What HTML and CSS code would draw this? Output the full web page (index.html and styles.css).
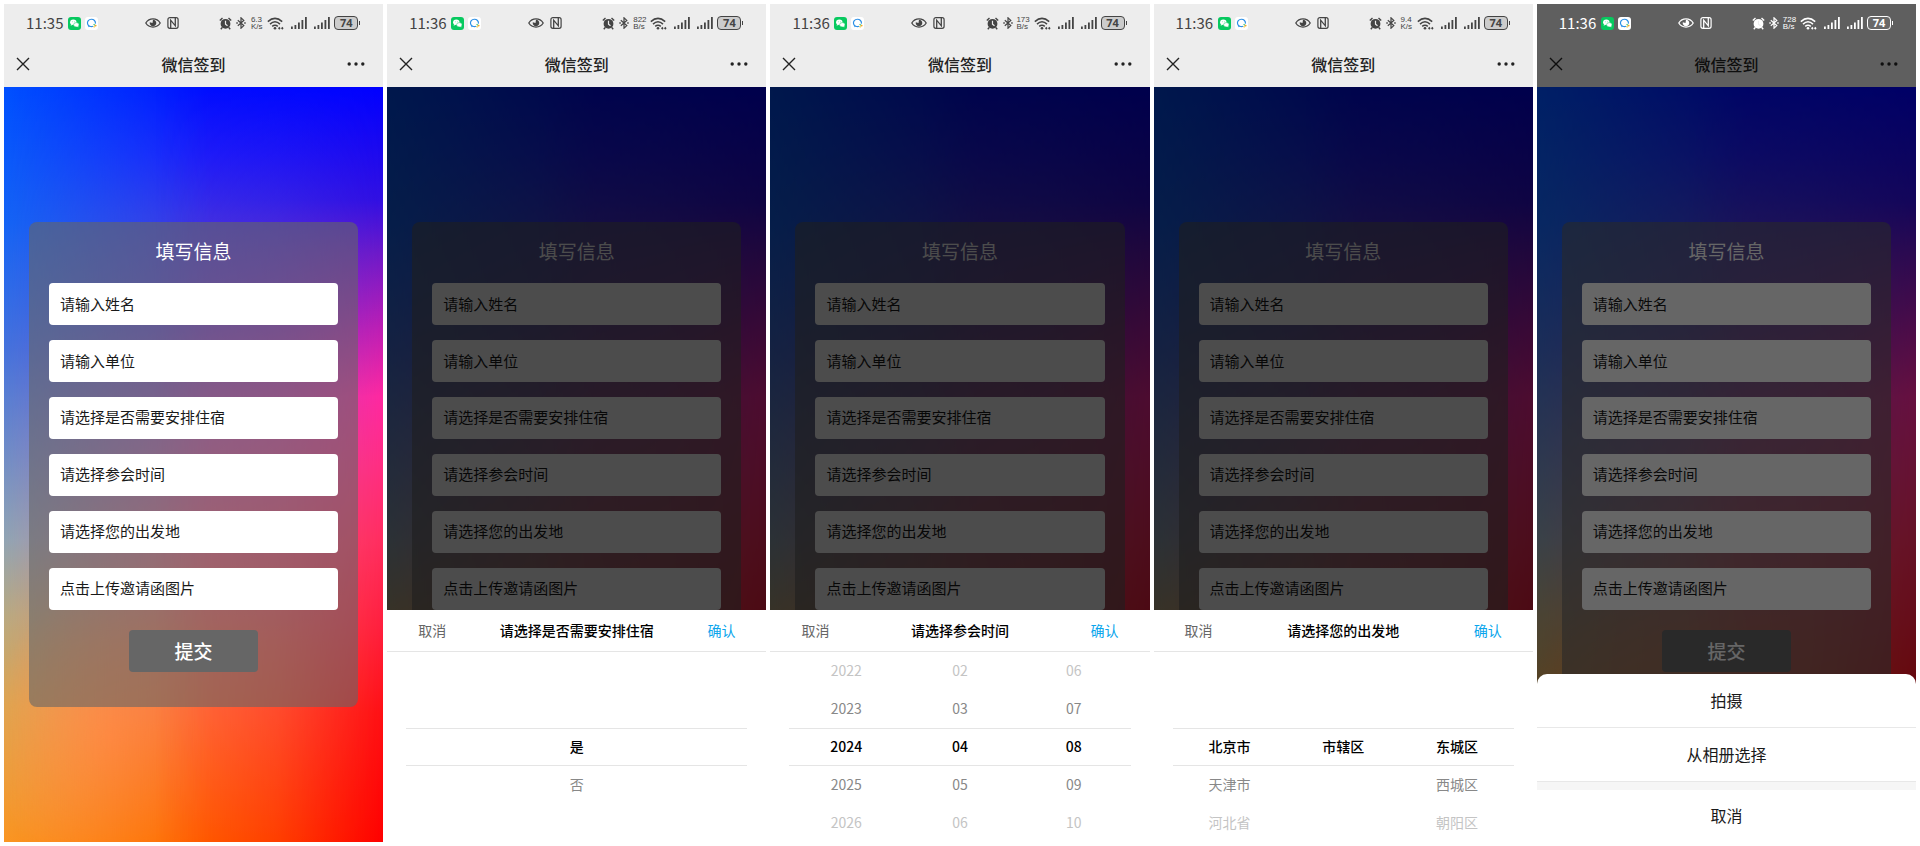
FILE: index.html
```html
<!DOCTYPE html>
<html lang="zh-CN">
<head>
<meta charset="utf-8">
<meta name="viewport" content="width=device-width, initial-scale=1">
<title>微信签到</title>
<link rel="stylesheet" href="styles.css">
</head>
<body>
<svg class="sprite" aria-hidden="true">
  <symbol id="wechat" viewBox="0 0 13 13">
    <rect width="13" height="13" rx="3" fill="#07c95f"/>
    <ellipse cx="5.3" cy="5.3" rx="3.2" ry="2.7" fill="#fff"/>
    <path d="M3 7l-.3 1.7L4.6 7.8z" fill="#fff"/>
    <ellipse cx="8.3" cy="7.8" rx="2.7" ry="2.2" fill="#fff" stroke="#07c95f" stroke-width=".5"/>
    <path d="M9 9.6l1.2.9-.1-1.4z" fill="#fff"/>
    <g fill="#07c95f"><circle cx="4.3" cy="4.8" r=".4"/><circle cx="6.3" cy="4.8" r=".4"/></g>
  </symbol>
  <symbol id="bubble" viewBox="0 0 13 13">
    <rect width="13" height="13" rx="3" fill="#fff"/>
    <path d="M8.2 9.3A4 3.7 0 1 1 10.4 6.6" fill="none" stroke="#2b8fe6" stroke-width="1.2"/>
    <path d="M3.6 8.6l-.4 1.6 1.8-.7z" fill="#2b8fe6"/>
    <path d="M8.6 7.2l1.3 1.2" stroke="#35c46a" stroke-width="1.1"/>
    <path d="M10.2 8l1 1.3" stroke="#f5a623" stroke-width="1.4"/>
    <path d="M8.6 9.3l1 1.1" stroke="#f7c948" stroke-width="1.4"/>
  </symbol>
  <symbol id="eye" viewBox="0 0 16 12">
    <path d="M.8 6C4.200 .6 11.800 .6 15.200 6 11.800 11.400 4.200 11.400 .8 6z" fill="none" stroke="currentColor" stroke-width="1.300"/>
    <path d="M8 2.700a3.300 3.300 0 1 1-3.200 2.500l2.700.7z" fill="currentColor"/>
  </symbol>
  <symbol id="nfc" viewBox="0 0 12 12">
    <rect x=".9" y=".7" width="10.200" height="10.600" rx="2" fill="none" stroke="currentColor" stroke-width="1.200"/>
    <path d="M3.700 11V3.200L8.300 8.800V1" fill="none" stroke="currentColor" stroke-width="1.300"/>
  </symbol>
  <symbol id="alarm" viewBox="0 0 13 13">
    <circle cx="6.500" cy="6.800" r="4.900" fill="currentColor"/>
    <path d="M.8 3.500L3.500 1M12.200 3.500L9.500 1M3.200 10.500L1.800 12.200M9.800 10.500l1.400 1.700" stroke="currentColor" stroke-width="1.400" fill="none"/>
    <path class="alarm-hand" d="M6.500 3.800v3.300l2 1.700" fill="none" stroke-width="1.200"/>
  </symbol>
  <symbol id="bluetooth" viewBox="0 0 10 12">
    <path d="M1.800 3.300l6 5.300L5 11.200V.8l2.800 2.600-6 5.300" fill="none" stroke="currentColor" stroke-width="1.200"/>
    <path d="M.3 5.300h1.500v1.400H.3zM8.200 5.300h1.500v1.400H8.200z" fill="currentColor"/>
  </symbol>
  <symbol id="wifi" viewBox="0 0 17 13">
    <g fill="none" stroke="currentColor" stroke-width="1.500">
      <path d="M.8 4.600Q8 -1.800 15.200 4.600"/><path d="M3 7.100Q8 2.500 13 7.100"/><path d="M5.200 9.400Q8 7 10.800 9.400"/>
    </g>
    <circle cx="8" cy="11.200" r="1.300" fill="currentColor"/>
    <path d="M11 11.300l1.300-1.500 1.300 1.500-1.300 1.500zM14 11.300l1.300-1.500 1.300 1.500-1.300 1.500z" fill="currentColor"/>
  </symbol>
  <symbol id="signal" viewBox="0 0 16 12">
    <path d="M0 9.500h1.800V12H0zM3.500 8h1.800v4H3.500zM7 5.500h1.800V12H7zM10.500 3h1.800v9h-1.800zM14 0h1.800v12H14z" fill="currentColor"/>
  </symbol>
  <symbol id="cross" viewBox="0 0 14 14">
    <path d="M1 1l12 12M13 1L1 13" fill="none" stroke="currentColor" stroke-width="1.400"/>
  </symbol>
  <symbol id="dots" viewBox="0 0 18 4">
    <g fill="currentColor"><circle cx="2.200" cy="2" r="1.700"/><circle cx="9" cy="2" r="1.700"/><circle cx="15.800" cy="2" r="1.700"/></g>
  </symbol>
</svg>

<main class="gallery">

  <section class="phone">
    <header class="top">
      <div class="status">
        <div class="status-group"><span class="clock">11:35</span><svg class="i13"><use href="#wechat"/></svg><svg class="i13"><use href="#bubble"/></svg></div>
        <div class="status-group wide"><svg class="eye"><use href="#eye"/></svg><svg class="i12"><use href="#nfc"/></svg></div>
        <div class="status-group end"><svg class="i13"><use href="#alarm"/></svg><svg class="bt"><use href="#bluetooth"/></svg><span class="speed"><span>6.3</span><span>K/s</span></span><svg class="wifi"><use href="#wifi"/></svg><svg class="signal"><use href="#signal"/></svg><svg class="signal"><use href="#signal"/></svg><span class="battery">74</span></div>
      </div>
      <nav class="navbar">
        <button class="icon-button" type="button" aria-label="关闭"><svg class="cross"><use href="#cross"/></svg></button>
        <h1 class="nav-title">微信签到</h1>
        <button class="icon-button" type="button" aria-label="更多"><svg class="dots"><use href="#dots"/></svg></button>
      </nav>
    </header>
    <div class="page">
      <form class="card">
        <h2 class="card-title">填写信息</h2>
        <input class="field" type="text" placeholder="请输入姓名" aria-label="姓名">
        <input class="field" type="text" placeholder="请输入单位" aria-label="单位">
        <select class="field" aria-label="住宿"><option>请选择是否需要安排住宿</option></select>
        <select class="field" aria-label="参会时间"><option>请选择参会时间</option></select>
        <select class="field" aria-label="出发地"><option>请选择您的出发地</option></select>
        <button class="field" type="button">点击上传邀请函图片</button>
        <button class="submit" type="submit">提交</button>
      </form>
    </div>
  </section>

  <section class="phone">
    <header class="top">
      <div class="status">
        <div class="status-group"><span class="clock">11:36</span><svg class="i13"><use href="#wechat"/></svg><svg class="i13"><use href="#bubble"/></svg></div>
        <div class="status-group wide"><svg class="eye"><use href="#eye"/></svg><svg class="i12"><use href="#nfc"/></svg></div>
        <div class="status-group end"><svg class="i13"><use href="#alarm"/></svg><svg class="bt"><use href="#bluetooth"/></svg><span class="speed"><span>822</span><span>B/s</span></span><svg class="wifi"><use href="#wifi"/></svg><svg class="signal"><use href="#signal"/></svg><svg class="signal"><use href="#signal"/></svg><span class="battery">74</span></div>
      </div>
      <nav class="navbar">
        <button class="icon-button" type="button" aria-label="关闭"><svg class="cross"><use href="#cross"/></svg></button>
        <h1 class="nav-title">微信签到</h1>
        <button class="icon-button" type="button" aria-label="更多"><svg class="dots"><use href="#dots"/></svg></button>
      </nav>
    </header>
    <div class="page">
      <form class="card">
        <h2 class="card-title">填写信息</h2>
        <input class="field" type="text" placeholder="请输入姓名" aria-label="姓名">
        <input class="field" type="text" placeholder="请输入单位" aria-label="单位">
        <select class="field" aria-label="住宿"><option>请选择是否需要安排住宿</option></select>
        <select class="field" aria-label="参会时间"><option>请选择参会时间</option></select>
        <select class="field" aria-label="出发地"><option>请选择您的出发地</option></select>
        <button class="field" type="button">点击上传邀请函图片</button>
        <button class="submit" type="submit">提交</button>
      </form>
      <div class="mask"></div>
      <div class="picker">
        <div class="picker-bar">
          <button class="picker-cancel" type="button">取消</button>
          <h3 class="picker-title">请选择是否需要安排住宿</h3>
          <button class="picker-confirm" type="button">确认</button>
        </div>
        <div class="wheels">
          <ul class="wheel"><li></li><li></li><li>是</li><li>否</li><li></li></ul>
        </div>
      </div>
    </div>
  </section>

  <section class="phone">
    <header class="top">
      <div class="status">
        <div class="status-group"><span class="clock">11:36</span><svg class="i13"><use href="#wechat"/></svg><svg class="i13"><use href="#bubble"/></svg></div>
        <div class="status-group wide"><svg class="eye"><use href="#eye"/></svg><svg class="i12"><use href="#nfc"/></svg></div>
        <div class="status-group end"><svg class="i13"><use href="#alarm"/></svg><svg class="bt"><use href="#bluetooth"/></svg><span class="speed"><span>173</span><span>B/s</span></span><svg class="wifi"><use href="#wifi"/></svg><svg class="signal"><use href="#signal"/></svg><svg class="signal"><use href="#signal"/></svg><span class="battery">74</span></div>
      </div>
      <nav class="navbar">
        <button class="icon-button" type="button" aria-label="关闭"><svg class="cross"><use href="#cross"/></svg></button>
        <h1 class="nav-title">微信签到</h1>
        <button class="icon-button" type="button" aria-label="更多"><svg class="dots"><use href="#dots"/></svg></button>
      </nav>
    </header>
    <div class="page">
      <form class="card">
        <h2 class="card-title">填写信息</h2>
        <input class="field" type="text" placeholder="请输入姓名" aria-label="姓名">
        <input class="field" type="text" placeholder="请输入单位" aria-label="单位">
        <select class="field" aria-label="住宿"><option>请选择是否需要安排住宿</option></select>
        <select class="field" aria-label="参会时间"><option>请选择参会时间</option></select>
        <select class="field" aria-label="出发地"><option>请选择您的出发地</option></select>
        <button class="field" type="button">点击上传邀请函图片</button>
        <button class="submit" type="submit">提交</button>
      </form>
      <div class="mask"></div>
      <div class="picker">
        <div class="picker-bar">
          <button class="picker-cancel" type="button">取消</button>
          <h3 class="picker-title">请选择参会时间</h3>
          <button class="picker-confirm" type="button">确认</button>
        </div>
        <div class="wheels">
          <ul class="wheel"><li>2022</li><li>2023</li><li>2024</li><li>2025</li><li>2026</li></ul>
          <ul class="wheel"><li>02</li><li>03</li><li>04</li><li>05</li><li>06</li></ul>
          <ul class="wheel"><li>06</li><li>07</li><li>08</li><li>09</li><li>10</li></ul>
        </div>
      </div>
    </div>
  </section>

  <section class="phone">
    <header class="top">
      <div class="status">
        <div class="status-group"><span class="clock">11:36</span><svg class="i13"><use href="#wechat"/></svg><svg class="i13"><use href="#bubble"/></svg></div>
        <div class="status-group wide"><svg class="eye"><use href="#eye"/></svg><svg class="i12"><use href="#nfc"/></svg></div>
        <div class="status-group end"><svg class="i13"><use href="#alarm"/></svg><svg class="bt"><use href="#bluetooth"/></svg><span class="speed"><span>9.4</span><span>K/s</span></span><svg class="wifi"><use href="#wifi"/></svg><svg class="signal"><use href="#signal"/></svg><svg class="signal"><use href="#signal"/></svg><span class="battery">74</span></div>
      </div>
      <nav class="navbar">
        <button class="icon-button" type="button" aria-label="关闭"><svg class="cross"><use href="#cross"/></svg></button>
        <h1 class="nav-title">微信签到</h1>
        <button class="icon-button" type="button" aria-label="更多"><svg class="dots"><use href="#dots"/></svg></button>
      </nav>
    </header>
    <div class="page">
      <form class="card">
        <h2 class="card-title">填写信息</h2>
        <input class="field" type="text" placeholder="请输入姓名" aria-label="姓名">
        <input class="field" type="text" placeholder="请输入单位" aria-label="单位">
        <select class="field" aria-label="住宿"><option>请选择是否需要安排住宿</option></select>
        <select class="field" aria-label="参会时间"><option>请选择参会时间</option></select>
        <select class="field" aria-label="出发地"><option>请选择您的出发地</option></select>
        <button class="field" type="button">点击上传邀请函图片</button>
        <button class="submit" type="submit">提交</button>
      </form>
      <div class="mask"></div>
      <div class="picker">
        <div class="picker-bar">
          <button class="picker-cancel" type="button">取消</button>
          <h3 class="picker-title">请选择您的出发地</h3>
          <button class="picker-confirm" type="button">确认</button>
        </div>
        <div class="wheels">
          <ul class="wheel"><li></li><li></li><li>北京市</li><li>天津市</li><li>河北省</li></ul>
          <ul class="wheel"><li></li><li></li><li>市辖区</li><li></li><li></li></ul>
          <ul class="wheel"><li></li><li></li><li>东城区</li><li>西城区</li><li>朝阳区</li></ul>
        </div>
      </div>
    </div>
  </section>

  <section class="phone">
    <header class="top top-dimmed">
      <div class="status">
        <div class="status-group"><span class="clock">11:36</span><svg class="i13"><use href="#wechat"/></svg><svg class="i13"><use href="#bubble"/></svg></div>
        <div class="status-group wide"><svg class="eye"><use href="#eye"/></svg><svg class="i12"><use href="#nfc"/></svg></div>
        <div class="status-group end"><svg class="i13"><use href="#alarm"/></svg><svg class="bt"><use href="#bluetooth"/></svg><span class="speed"><span>728</span><span>B/s</span></span><svg class="wifi"><use href="#wifi"/></svg><svg class="signal"><use href="#signal"/></svg><svg class="signal"><use href="#signal"/></svg><span class="battery">74</span></div>
      </div>
      <nav class="navbar">
        <button class="icon-button" type="button" aria-label="关闭"><svg class="cross"><use href="#cross"/></svg></button>
        <h1 class="nav-title">微信签到</h1>
        <button class="icon-button" type="button" aria-label="更多"><svg class="dots"><use href="#dots"/></svg></button>
      </nav>
    </header>
    <div class="page">
      <form class="card">
        <h2 class="card-title">填写信息</h2>
        <input class="field" type="text" placeholder="请输入姓名" aria-label="姓名">
        <input class="field" type="text" placeholder="请输入单位" aria-label="单位">
        <select class="field" aria-label="住宿"><option>请选择是否需要安排住宿</option></select>
        <select class="field" aria-label="参会时间"><option>请选择参会时间</option></select>
        <select class="field" aria-label="出发地"><option>请选择您的出发地</option></select>
        <button class="field" type="button">点击上传邀请函图片</button>
        <button class="submit" type="submit">提交</button>
      </form>
      <div class="mask mask-light"></div>
      <div class="actions">
        <button class="action" type="button">拍摄</button>
        <button class="action" type="button">从相册选择</button>
        <button class="action action-cancel" type="button">取消</button>
      </div>
    </div>
  </section>

</main>
</body>
</html>
```
FILE: styles.css
```css
* {
  box-sizing: border-box;
}

body {
  margin: 0;
  background: #fff;
  font-family: "Noto Sans CJK SC", "Noto Sans", sans-serif;
  color: #1a1a1a;
}

h1, h2, h3, ul {
  margin: 0;
  padding: 0;
  font-weight: 400;
  list-style: none;
}

button, input, select {
  margin: 0;
  padding: 0;
  border: 0;
  background: none;
  color: inherit;
  font: inherit;
}

svg {
  display: block;
  flex: none;
}

.sprite {
  position: absolute;
  width: 0;
  height: 0;
}

.gallery {
  display: grid;
  grid-template-columns: repeat(5, minmax(0, 1fr));
  gap: 4px;
  min-height: 100vh;
  padding: 4px;
}

.phone {
  display: flex;
  flex-direction: column;
}

/* Status bar and navigation bar */

.top {
  padding-bottom: 2px;
  background: #ededed;
  color: #222;
}

.status {
  display: grid;
  grid-template-columns: 119px auto 1fr;
  align-items: center;
  height: 38px;
  padding: 0 25px 0 22px;
  color: #444;
}

.status-group {
  display: flex;
  align-items: center;
  gap: 4px;
}

.status-group.wide {
  gap: 6px;
}

.status-group.end {
  justify-content: flex-end;
}

.clock {
  width: 38px;
  font-size: 15px;
  line-height: 20px;
}

.i13 {
  width: 13px;
  height: 13px;
}

.i12 {
  width: 12px;
  height: 12px;
}

.eye {
  width: 16px;
  height: 12px;
}

.bt {
  width: 10px;
  height: 12px;
}

.wifi {
  width: 17px;
  height: 13px;
}

.signal {
  width: 16px;
  height: 12px;
  margin-left: 3px;
}

.alarm-hand {
  stroke: #ededed;
}

.speed {
  display: grid;
  justify-content: center;
  width: 13px;
  font: 400 8px/7px "Liberation Sans", sans-serif;
}

.battery {
  position: relative;
  width: 24px;
  height: 14px;
  border: 1px solid currentColor;
  border-radius: 4px;
  background: rgba(128, 128, 128, 0.3);
  font: 700 11px/12px "Noto Sans", sans-serif;
  text-align: center;
}

.battery::after {
  content: "";
  position: absolute;
  top: 4px;
  right: -3px;
  width: 1px;
  height: 4px;
  background: currentColor;
}

.navbar {
  display: grid;
  grid-template-columns: 24px 1fr 24px;
  align-items: center;
  height: 43px;
  padding: 0 12px;
}

.icon-button {
  display: grid;
  place-items: center start;
  height: 24px;
}

.cross {
  width: 14px;
  height: 14px;
}

.dots {
  width: 18px;
  height: 4px;
}

.nav-title {
  font-size: 16px;
  font-weight: 500;
  line-height: 24px;
  text-align: center;
}

.top-dimmed {
  background: #5f5f5f;
  color: #0e0e0e;
}

.top-dimmed .status {
  color: #fff;
}

.top-dimmed .alarm-hand {
  stroke: #5f5f5f;
}

/* Page backdrop: three vertical blends, cross-faded from left to right */

.page {
  position: relative;
  isolation: isolate;
  display: flex;
  flex: 1;
  flex-direction: column;
  justify-content: center;
  padding: 0 25px;
  background:
    radial-gradient(ellipse 32% 20% at 28% 86%, rgba(255, 160, 85, 0.9), rgba(255, 160, 85, 0)),
    linear-gradient(#0050ff 0%, #1464f5 18%, #4673dc 35%, #6e8cc8 48%, #91a5b4 60%, #b9aa82 70%, #dca550 82%, #fa9623 100%);
}

.page::before,
.page::after {
  content: "";
  position: absolute;
  inset: 0;
  z-index: -1;
}

.page::before {
  background: linear-gradient(#000fff 0%, #1e1efa 9%, #3c32e6 17%, #643cd7 30%, #c85ab4 47%, #f0648c 60%, #ff7350 74%, #ff7337 84%, #ff6900 100%);
  mask-image: linear-gradient(to right, transparent, #000 55%);
}

.page::after {
  background: linear-gradient(#0000ff 0%, #320fe1 15%, #6e19c8 22%, #be1eb4 32%, #ff28a0 41%, #ff2d82 50%, #ff2d5f 60%, #ff1e3c 72%, #ff0f14 83%, #ff0000 100%);
  mask-image: linear-gradient(to right, transparent 40%, rgba(0, 0, 0, 0.4) 72%, #000);
}

/* Sign-in form */

.card {
  display: grid;
  gap: 15px;
  padding: 15px 20px 35px;
  border-radius: 8px;
  background: rgba(102, 102, 102, 0.6);
}

.card-title {
  margin-bottom: 3px;
  color: #fff;
  font-size: 19px;
  line-height: 28px;
  text-align: center;
}

.field {
  width: 100%;
  height: 42px;
  padding: 0 11px 2px;
  border-radius: 4px;
  background: #fff;
  color: #1a1a1a;
  font-size: 15px;
  line-height: 22px;
  text-align: left;
  appearance: none;
}

.field::placeholder {
  color: #1a1a1a;
  opacity: 1;
}

.submit {
  justify-self: center;
  width: 129px;
  height: 42px;
  margin-top: 5px;
  padding-bottom: 2px;
  border-radius: 4px;
  background: #666;
  color: #fff;
  font-size: 19px;
  font-weight: 500;
}

.mask {
  position: absolute;
  inset: 0;
  background: rgba(0, 0, 0, 0.7);
}

.mask-light {
  background: rgba(0, 0, 0, 0.6);
}

/* Wheel picker */

.picker {
  position: absolute;
  right: 0;
  bottom: 0;
  left: 0;
  background: #fff;
  font-size: 14px;
  line-height: 20px;
}

.picker-bar {
  display: grid;
  grid-template-columns: auto 1fr auto;
  align-items: center;
  height: 42px;
  padding: 0 31px 2px;
  border-bottom: 1px solid #e5e5e5;
}

.picker-cancel {
  color: #666;
}

.picker-title {
  color: #000;
  font-size: 14px;
  font-weight: 500;
  text-align: center;
}

.picker-confirm {
  color: #09a5ec;
}

.wheels {
  display: grid;
  grid-auto-flow: column;
  grid-auto-columns: 1fr;
  padding: 0 19px;
}

.wheel li {
  height: 38px;
  border: solid transparent;
  border-width: 1px 0;
  color: #888;
  line-height: 34px;
  text-align: center;
}

.wheel li:first-child,
.wheel li:last-child {
  color: #c4c4c4;
}

.wheel li:nth-child(3) {
  border-color: #e5e5e5;
  color: #000;
  font-weight: 500;
}

/* Action sheet */

.actions {
  position: absolute;
  right: 0;
  bottom: 0;
  left: 0;
  display: grid;
  overflow: hidden;
  border-radius: 10px 10px 0 0;
  background: #fff;
}

.action {
  height: 54px;
  padding-bottom: 2px;
  border-bottom: 1px solid #e8e8e8;
  color: #1a1a1a;
  font-size: 16px;
  line-height: 24px;
}

.action-cancel {
  height: 60px;
  border-top: 8px solid #f6f6f6;
  border-bottom: 0;
}
```
